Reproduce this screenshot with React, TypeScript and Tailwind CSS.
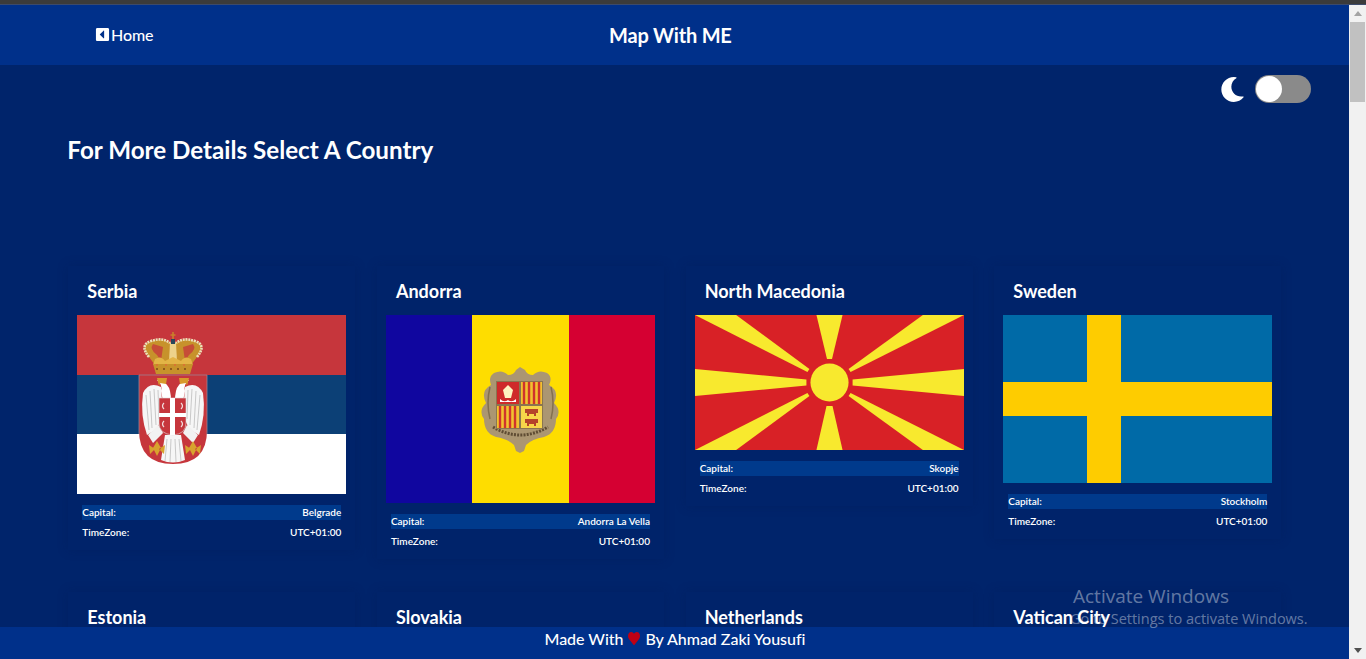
import { FaCaretSquareLeft, FaHeart, FaMoon } from "react-icons/fa";

function SerbiaFlag() {
  return (
    <svg viewBox="0 0 269 179" preserveAspectRatio="none" className="block h-[179px] w-full">
      <rect width="269" height="60" fill="#c6363c" />
      <rect y="60" width="269" height="59" fill="#0c4076" />
      <rect y="119" width="269" height="60" fill="#fff" />
      {/* crown */}
      <path d="M72 42 Q62 30 74 26 Q86 22 93 28 H99 Q106 22 118 26 Q130 30 120 42 L114 50 H78 Z" fill="#c7922b" />
      <path d="M72 42 Q62 30 74 26 Q86 22 93 28 M120 42 Q130 30 118 26 Q106 22 99 28" fill="none" stroke="#ece0b8" strokeWidth="2.6" strokeDasharray="2 0.8" />
      <path d="M76 29 Q72 34 80 40 L84 46 L86 32 Z M116 29 Q120 34 112 40 L108 46 L106 32 Z" fill="#c6363c" opacity="0.75" />
      <path d="M93 28 Q96 23 99 28 L100 46 H92 Z" fill="#edd28a" />
      <path d="M78 44 Q84 40 88 46 L96 42 L104 46 Q108 40 114 44 L116 50 H76 Z" fill="#e3b446" />
      <path d="M76 49 H116 L113 59 H79 Z" fill="#c7922b" />
      <path d="M79 54 H114" stroke="#7c4a1a" strokeWidth="1.6" strokeDasharray="2 5" />
      <path d="M79 50 H114" stroke="#e95b3b" strokeWidth="1.2" strokeDasharray="2 7" />
      <path d="M96 17 V25 M93.5 20 H98.5" stroke="#c9812b" strokeWidth="1.6" />
      <rect x="94" y="24" width="4" height="5" fill="#28465a" />
      {/* shield */}
      <path d="M62 60 H130 V115 Q130 149 96 149 Q62 149 62 115 Z" fill="#c6363c" />
      <path d="M62 60 H130 M62 60 V119 M130 60 V119" stroke="#a0808f" strokeWidth="0.8" fill="none" />
      {/* wings */}
      <path d="M84 72 Q72 66 66 78 Q63 100 70 120 L80 114 L86 100 Z" fill="#f6f6f6" />
      <path d="M108 72 Q120 66 126 78 Q129 100 122 120 L112 114 L106 100 Z" fill="#f6f6f6" />
      <path d="M69 80 L72 115 M73 76 L75 113 M77 74 L79 110 M81 75 L82 104 M123 80 L120 115 M119 76 L117 113 M115 74 L113 110 M111 75 L110 104" stroke="#b5b5b5" strokeWidth="0.7" fill="none" />
      {/* heads and necks */}
      <path d="M94 86 Q94 74 90 70 Q86 64 80 65 Q86 70 84 76 L86 86 Z" fill="#fff" />
      <path d="M98 86 Q98 74 102 70 Q106 64 112 65 Q106 70 108 76 L106 86 Z" fill="#fff" />
      <path d="M80 63 L90 63 L89 69 L83 68 L82 71 Z M112 63 L102 63 L103 69 L109 68 L110 71 Z" fill="#d89a2c" />
      {/* legs */}
      <path d="M71 120 L82 110 L86 118 L76 128 Z M121 120 L110 110 L106 118 L116 128 Z" fill="#f2f2f2" />
      {/* tail */}
      <path d="M88 120 H104 L108 145 Q96 150 84 145 Z" fill="#f6f6f6" />
      <path d="M90 124 L88 146 M94 124 L93 147 M98 124 L99 147 M102 124 L104 146" stroke="#b5b5b5" strokeWidth="0.7" />
      {/* lilies */}
      <path d="M80 126 L84 133 L80 141 L76 133 Z M72 130 L78 134 L73 139 Z M88 130 L82 134 L87 139 Z" fill="#d8a22e" />
      <path d="M116 126 L120 133 L116 141 L112 133 Z M108 130 L114 134 L109 139 Z M124 130 L118 134 L123 139 Z" fill="#d8a22e" />
      {/* small shield */}
      <path d="M82 83 H109 V108 Q109 119 96 120 Q82 119 82 108 Z" fill="#c6363c" stroke="#ddd" strokeWidth="0.6" />
      <path d="M93 83 H98 V98 H109 V102 H98 V120 H93 V102 H82 V98 H93 Z" fill="#fff" />
      <path d="M87 88 Q84 91 87 94 M104 88 Q107 91 104 94 M87 106 Q84 109 87 112 M104 106 Q107 109 104 112" stroke="#f2dede" strokeWidth="1.2" fill="none" />
    </svg>
  );
}

function AndorraFlag() {
  return (
    <svg viewBox="0 0 269 188" preserveAspectRatio="none" className="block h-[188px] w-full">
      <rect width="86" height="188" fill="#10069f" />
      <rect x="86" width="97" height="188" fill="#fedd00" />
      <rect x="183" width="86" height="188" fill="#d50032" />
      {/* scrollwork */}
      <path d="M108 58 Q116 54 122 60 Q128 60 130 55 L134 52 L139 55 Q141 60 147 60 Q153 54 161 58 Q167 62 163 70 Q174 76 168 88 Q176 96 170 104 Q170 118 158 122 Q146 124 140 130 L138 136 L134 138 L130 136 L128 130 Q122 124 110 122 Q98 118 98 104 Q92 96 100 88 Q94 76 105 70 Q102 62 108 58 Z" fill="#ab9672" />
      <path d="M104 72 Q100 88 104 104 M165 72 Q169 88 165 104" stroke="#83704f" strokeWidth="1.5" fill="none" />
      <path d="M107 112 Q134 128 162 112" stroke="#5f4c33" strokeWidth="3" strokeDasharray="2 1.2" fill="none" />
      <rect x="110" y="66" width="47" height="48" fill="#8a7550" />
      <rect x="111" y="67" width="22" height="22" fill="#cf2a2a" />
      <path d="M122 70 L127 75 L125 83 H119 L117 75 Z" fill="#fff3c0" />
      <path d="M114 84 Q118 88 122 85 Q126 88 130 84 V87 H114 Z" fill="#fff" />
      <rect x="135" y="67" width="21" height="22" fill="#f2c230" />
      <path d="M138 67 V89 M143 67 V89 M148 67 V89 M153 67 V89" stroke="#d0342c" strokeWidth="2.4" />
      <rect x="111" y="91" width="22" height="22" fill="#f2c230" />
      <path d="M114 91 V113 M119 91 V113 M124 91 V113 M129 91 V113" stroke="#d0342c" strokeWidth="2.4" />
      <rect x="135" y="91" width="21" height="22" fill="#f7d64a" />
      <path d="M139 94 H152 V98 H150 V101 H148 V99 H143 V101 H141 V98 H139 Z M139 104 H152 V108 H150 V111 H148 V109 H143 V111 H141 V108 H139 Z" fill="#b5432a" />
    </svg>
  );
}

function MacedoniaFlag() {
  return (
    <svg viewBox="0 0 268 135" preserveAspectRatio="none" className="block h-[135px] w-full">
      <rect width="268" height="135" fill="#d82126" />
      <g fill="#f8e92e">
        <polygon points="121,0 147,0 136.5,44 131.5,44" />
        <polygon points="121,135 147,135 137,91 131,91" />
        <polygon points="0,54 0,81 111,70.5 111,64.5" />
        <polygon points="268,54 268,81 157,70.5 157,64.5" />
        <polygon points="0,0 41,0 114,54 112,57" />
        <polygon points="268,0 227,0 153,54 155,57" />
        <polygon points="0,135 41,135 114,81 112,78" />
        <polygon points="268,135 227,135 153,81 155,78" />
        <circle cx="134" cy="67.5" r="19" />
      </g>
    </svg>
  );
}

function SwedenFlag() {
  return (
    <svg viewBox="0 0 269 168" preserveAspectRatio="none" className="block h-[168px] w-full">
      <rect width="269" height="168" fill="#006aa7" />
      <rect x="84" width="34" height="168" fill="#fecc00" />
      <rect y="67" width="269" height="34" fill="#fecc00" />
    </svg>
  );
}

function InfoRows({ capital }: { capital: string }) {
  return (
    <div className="mt-[11px] px-[5px] pb-[10px] text-[10px] font-semibold leading-[15px] text-white">
      <div className="flex justify-between bg-[#003a8c]">
        <span>Capital:</span>
        <span>{capital}</span>
      </div>
      <div className="mt-[5px] flex justify-between">
        <span>TimeZone:</span>
        <span>UTC+01:00</span>
      </div>
    </div>
  );
}

const row1 = [
  { name: "Serbia", capital: "Belgrade", flag: <SerbiaFlag /> },
  { name: "Andorra", capital: "Andorra La Vella", flag: <AndorraFlag /> },
  { name: "North Macedonia", capital: "Skopje", flag: <MacedoniaFlag /> },
  { name: "Sweden", capital: "Stockholm", flag: <SwedenFlag /> },
];

const row2 = ["Estonia", "Slovakia", "Netherlands", "Vatican City"];

export default function App() {
  return (
    <div className="relative flex h-[659px] flex-col overflow-hidden bg-[#f1f1f1] font-['Lato',sans-serif] text-white">
      <div className="h-[5px] shrink-0 border-b border-[#3c4a6b] bg-[#3b3b3b]" />
      <div className="flex min-h-0 flex-1">
        <div className="flex min-w-0 flex-1 flex-col bg-[#00246b]">
          <header className="relative flex h-[60px] shrink-0 items-center bg-[#00308a] pl-[95px]">
            <a className="flex items-center gap-px text-base font-medium tracking-[-0.1px]">
              <FaCaretSquareLeft className="mb-[2px] text-[15px]" />
              Home
            </a>
            <h1 className="absolute left-[609px] top-[16px] text-xl font-bold leading-7 tracking-[-0.2px]">Map With ME</h1>
          </header>

          <main className="min-h-0 flex-1 overflow-hidden pl-[68.3px] pr-[67.7px]">
            <div className="mt-[10px] flex items-center justify-end">
              <div className="-mr-[30px] flex items-center gap-[10px]">
                <FaMoon className="text-[25px]" />
                <div className="flex h-[28px] w-[56px] items-center rounded-full bg-[#8a8a8a] pl-px">
                  <span className="h-[26px] w-[26px] rounded-full bg-white" />
                </div>
              </div>
            </div>
            <h2 className="mt-[30px] -ml-px text-[24.2px] font-bold leading-[34px]">For More Details Select A Country</h2>

            <div className="mt-[99px] grid grid-cols-4 items-start gap-x-[21.67px] gap-y-[33px]">
              {row1.map((c) => (
                <section key={c.name} className="bg-[#00236a] px-[9px] shadow-[0_0_10px_rgba(0,24,80,0.25)]">
                  <h3 className="flex h-[49px] items-center pl-[10px] text-lg font-bold">{c.name}</h3>
                  {c.flag}
                  <InfoRows capital={c.capital} />
                </section>
              ))}
              {row2.map((name) => (
                <section key={name} className="h-[120px] bg-[#00236a] px-[9px] shadow-[0_0_10px_rgba(0,24,80,0.25)]">
                  <h3 className="flex h-[49px] items-center pl-[10px] text-lg font-bold">{name}</h3>
                </section>
              ))}
            </div>
          </main>

          <footer className="relative flex h-[32px] shrink-0 items-center bg-[#00308a] pb-[8px] pl-[544.5px] text-base font-medium tracking-[-0.03px]">
            Made With
            <FaHeart preserveAspectRatio="none" className="mx-[5px] mb-[2px] h-[15px] w-[12px] text-[#c00014]" />
            By Ahmad Zaki Yousufi
          </footer>
        </div>

        {/* scrollbar */}
        <div className="flex w-[17px] shrink-0 flex-col items-center bg-[#f1f1f1]">
          <div className="flex h-[17px] w-full items-center justify-center">
            <span className="h-0 w-0 border-x-[4px] border-b-[5px] border-x-transparent border-b-[#a3a3a3]" />
          </div>
          <div className="h-[80px] w-[15px] bg-[#c1c1c1]" />
          <div className="flex-1" />
          <div className="flex h-[17px] w-full items-center justify-center">
            <span className="h-0 w-0 border-x-[4px] border-t-[5px] border-x-transparent border-t-[#505050]" />
          </div>
        </div>
      </div>

      {/* windows watermark */}
      <div className="absolute left-[1073px] top-[584px] font-['Open_Sans',sans-serif] text-white/40">
        <div className="text-[19px] leading-6">Activate Windows</div>
        <div className="-ml-[3px] mt-[1px] whitespace-nowrap text-[14.5px] leading-5">Go to Settings to activate Windows.</div>
      </div>
    </div>
  );
}
